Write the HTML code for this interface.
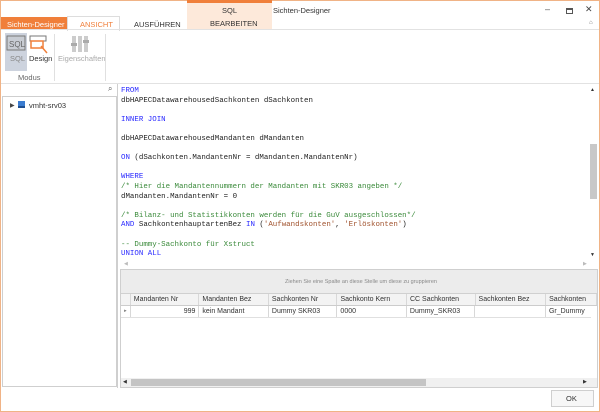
<!DOCTYPE html>
<html><head><meta charset="utf-8"><style>
*{margin:0;padding:0;box-sizing:border-box}
body{width:600px;height:412px;overflow:hidden;background:#fff;font-family:"Liberation Sans",sans-serif;position:relative}
.a{position:absolute}
.win{left:0;top:0;width:600px;height:412px;border:1px solid #f0b386}
.t{font-size:7.5px;color:#333;white-space:nowrap}
pre{font-family:"Liberation Mono",monospace;font-size:7.45px;line-height:9.6px;color:#222}
.k{color:#2a2aff}.c{color:#3a8a3a}.s{color:#a0522d}
.hd{font-size:7px;color:#333;border-right:1px solid #d8d8d8;height:11px;line-height:11px;padding-left:3px;white-space:nowrap;overflow:hidden}
</style></head><body>
<div class="a win"></div>
<div class="a" style="left:187px;top:0;width:85px;height:3px;background:#f07f3a"></div>
<div class="a" style="left:187px;top:3px;width:85px;height:27px;background:#fde9da"></div>
<div class="a t" style="left:222px;top:6px;font-size:7.5px">SQL</div>
<div class="a t" style="left:210px;top:19px">BEARBEITEN</div>
<div class="a t" style="left:273px;top:6px">Sichten-Designer</div>
<div class="a t" style="left:545px;top:4px;font-size:9px;color:#555">–</div>
<div class="a" style="left:566px;top:8px;width:7px;height:6px;border:1px solid #555;border-top-width:2px"></div>
<div class="a t" style="left:585px;top:4px;font-size:9px;color:#444">✕</div>
<div class="a t" style="left:589px;top:20px;font-size:6px;color:#777">⌂</div>
<div class="a" style="left:1px;top:17px;width:66px;height:13px;background:#f07f3a"></div>
<div class="a t" style="left:7px;top:20px;color:#fff">Sichten-Designer</div>
<div class="a" style="left:67px;top:16px;width:53px;height:15px;background:#fff;border:1px solid #ddd;border-bottom:none"></div>
<div class="a t" style="left:80px;top:20px;color:#f07f3a">ANSICHT</div>
<div class="a t" style="left:134px;top:20px">AUSFÜHREN</div>
<div class="a" style="left:1px;top:29px;width:598px;height:1px;background:#e2e2e2"></div>
<div class="a" style="left:5px;top:33px;width:22px;height:38px;background:#cdd3de"></div>
<svg class="a" style="left:6px;top:35px" width="20" height="18"><rect x="1" y="1" width="18" height="14" fill="#c8ccd3" stroke="#777"/><text x="3" y="12" font-size="8" font-family="Liberation Sans" fill="#666">SQL</text></svg>
<div class="a t" style="left:10px;top:54px;color:#888">SQL</div>
<svg class="a" style="left:29px;top:34px" width="20" height="20"><rect x="1" y="2" width="16" height="5" fill="none" stroke="#777"/><rect x="2" y="7" width="12" height="7" fill="none" stroke="#f07f3a" stroke-width="1.5"/><path d="M12 12 L18 19" stroke="#f07f3a" stroke-width="1.5"/></svg>
<div class="a t" style="left:29px;top:54px">Design</div>
<div class="a t" style="left:18px;top:73px;color:#666">Modus</div>
<div class="a" style="left:54px;top:34px;width:1px;height:47px;background:#e0e0e0"></div>
<svg class="a" style="left:70px;top:35px" width="20" height="18"><rect x="2" y="1" width="4" height="16" fill="#ccc"/><rect x="8" y="1" width="4" height="16" fill="#ccc"/><rect x="14" y="1" width="4" height="16" fill="#ccc"/><rect x="1" y="8" width="6" height="3" fill="#aaa"/><rect x="13" y="5" width="6" height="3" fill="#aaa"/></svg>
<div class="a t" style="left:58px;top:54px;color:#aaa">Eigenschaften</div>
<div class="a" style="left:105px;top:34px;width:1px;height:47px;background:#e0e0e0"></div>
<div class="a" style="left:1px;top:83px;width:598px;height:1px;background:#e2e2e2"></div>
<div class="a t" style="left:108px;top:84px;font-size:8px;color:#555">⌕</div>
<div class="a" style="left:2px;top:96px;width:115px;height:291px;border:1px solid #cfcfcf"></div>
<div class="a t" style="left:10px;top:102px;font-size:6px;color:#444">▶</div>
<div class="a" style="left:18px;top:101px;width:7px;height:7px;background:#3a7cd0;border-bottom:2px solid #1f4f90"></div>
<div class="a t" style="left:29px;top:101px">vmht-srv03</div>
<div class="a" style="left:117px;top:84px;width:1px;height:304px;background:#cfcfcf"></div>
<pre class="a" style="left:121px;top:87px">
<span class="k">FROM</span>
dbHAPECDatawarehousedSachkonten dSachkonten

<span class="k">INNER JOIN</span>

dbHAPECDatawarehousedMandanten dMandanten

<span class="k">ON</span> (dSachkonten.MandantenNr = dMandanten.MandantenNr)

<span class="k">WHERE</span>
<span class="c">/* Hier die Mandantennummern der Mandanten mit SKR03 angeben */</span>
dMandanten.MandantenNr = 0

<span class="c">/* Bilanz- und Statistikkonten werden für die GuV ausgeschlossen*/</span>
<span class="k">AND</span> SachkontenhauptartenBez <span class="k">IN</span> (<span class="s">'Aufwandskonten'</span>, <span class="s">'Erlöskonten'</span>)

<span class="c">-- Dummy-Sachkonto für Xstruct</span>
<span class="k">UNION ALL</span></pre>
<div class="a" style="left:590px;top:144px;width:7px;height:55px;background:#c8c8c8"></div>
<div class="a t" style="left:590px;top:87px;font-size:5px">▲</div>
<div class="a t" style="left:590px;top:252px;font-size:5px">▼</div>
<div class="a t" style="left:124px;top:261px;font-size:5px;color:#bbb">◀</div>
<div class="a t" style="left:583px;top:261px;font-size:5px;color:#bbb">▶</div>
<div class="a" style="left:120px;top:269px;width:478px;height:119px;border:1px solid #cfcfcf"></div>
<div class="a" style="left:121px;top:270px;width:476px;height:24px;background:#ececec;border-bottom:1px solid #d0d0d0"></div>
<div class="a t" style="left:285px;top:279px;font-size:5.5px;color:#888">Ziehen Sie eine Spalte an diese Stelle um diese zu gruppieren</div>
<div class="a" style="left:121px;top:294px;width:476px;height:12px;background:#f3f3f3;border-bottom:1px solid #ccc;display:flex">
<div class="hd" style="width:10px;padding:0"></div>
<div class="hd" style="width:70px">Mandanten Nr</div>
<div class="hd" style="width:71px">Mandanten Bez</div>
<div class="hd" style="width:70px">Sachkonten Nr</div>
<div class="hd" style="width:71px">Sachkonto Kern</div>
<div class="hd" style="width:70px">CC Sachkonten</div>
<div class="hd" style="width:72px">Sachkonten Bez</div>
<div class="hd" style="width:52px">Sachkonten</div>
</div>
<div class="a" style="left:121px;top:306px;width:470px;height:12px;border-bottom:1px solid #e0e0e0;display:flex">
<div class="hd" style="width:10px;padding:0;font-size:5px;text-align:center;color:#777">▸</div>
<div class="hd" style="width:70px;text-align:right;padding-right:3px">999</div>
<div class="hd" style="width:71px">kein Mandant</div>
<div class="hd" style="width:70px">Dummy SKR03</div>
<div class="hd" style="width:71px">0000</div>
<div class="hd" style="width:70px">Dummy_SKR03</div>
<div class="hd" style="width:72px"></div>
<div class="hd" style="width:46px;border:none">Gr_Dummy</div>
</div>
<div class="a" style="left:121px;top:378px;width:476px;height:9px;background:#f0f0f0"></div>
<div class="a" style="left:131px;top:379px;width:295px;height:7px;background:#c4c4c4"></div>
<div class="a t" style="left:123px;top:379px;font-size:5px">◀</div>
<div class="a t" style="left:583px;top:379px;font-size:5px">▶</div>
<div class="a" style="left:551px;top:390px;width:43px;height:17px;border:1px solid #cfcfcf;background:#f7f7f7"></div>
<div class="a t" style="left:566px;top:394px">OK</div>
</body></html>
